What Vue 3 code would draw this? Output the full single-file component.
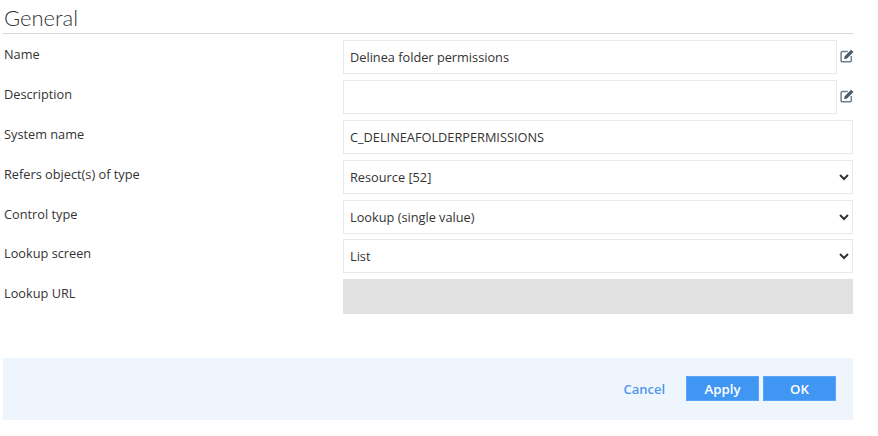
<script setup>
const rows = [
  { label: 'Name', type: 'input', value: 'Delinea folder permissions', edit: true },
  { label: 'Description', type: 'input', value: '', edit: true },
  { label: 'System name', type: 'input', value: 'C_DELINEAFOLDERPERMISSIONS' },
  { label: 'Refers object(s) of type', type: 'select', value: 'Resource [52]' },
  { label: 'Control type', type: 'select', value: 'Lookup (single value)' },
  { label: 'Lookup screen', type: 'select', value: 'List' },
  { label: 'Lookup URL', type: 'disabled', value: '' },
]
</script>

<template>
  <div class="page">
    <h2 class="title">General</h2>
    <div class="rows">
      <div v-for="row in rows" :key="row.label" class="row">
        <label class="label">{{ row.label }}</label>
        <div class="control" :class="{ editable: row.edit }">
          <select v-if="row.type === 'select'" class="field select">
            <option>{{ row.value }}</option>
          </select>
          <div v-else-if="row.type === 'disabled'" class="field disabled"></div>
          <input v-else class="field" type="text" :value="row.value" />
          <svg v-if="row.edit" class="edit" viewBox="0 0 14 14" aria-hidden="true">
            <path d="M7.8 2.6H2.2a1.1 1.1 0 0 0-1.1 1.1v8c0 .6.5 1.1 1.1 1.1h8c.6 0 1.1-.5 1.1-1.1V7" fill="none" stroke="#71808c" stroke-width="1.5" />
            <path d="M4 10.2l.7-3L10.6 1.2c.3-.3.7-.3 1 0l1.4 1.4c.3.3.3.7 0 1L7 9.5z" fill="#475a6a" />
          </svg>
        </div>
      </div>
    </div>
    <div class="footer">
      <a class="cancel">Cancel</a>
      <button class="btn apply">Apply</button>
      <button class="btn">OK</button>
    </div>
  </div>
</template>

<style>
html, body { margin: 0; background: #fff; }
</style>

<style scoped>
.page {
  width: 878px;
  height: 436px;
  box-sizing: border-box;
  padding-top: 6px;
  font-family: "Open Sans", "Liberation Sans", sans-serif;
  color: #333;
  overflow: hidden;
}
.title {
  margin: 0 25px 0 3px;
  height: 27px;
  padding-left: 1px;
  line-height: 24px;
  font-family: "Lato", "Open Sans", sans-serif;
  font-size: 22px;
  font-weight: 300;
  color: #333;
  border-bottom: 1px solid #d6d6d6;
}
.rows {
  display: flex;
  flex-direction: column;
  gap: 5.88px;
  margin-top: 6px;
}
.row {
  display: flex;
  height: 34px;
}
.label {
  width: 343px;
  box-sizing: border-box;
  padding-left: 4px;
  padding-top: 5px;
  font-size: 12.75px;
  line-height: 18px;
  color: #333;
}
.control {
  width: 510px;
  display: flex;
  align-items: center;
}
.field {
  display: block;
  width: 100%;
  height: 34px;
  box-sizing: border-box;
  margin: 0;
  padding: 0 6px;
  border: 1px solid #e9e9e9;
  border-radius: 0;
  background: #fff;
  font: 12.75px "Open Sans", "Liberation Sans", sans-serif;
  color: #333;
  outline: none;
}
.select {
  padding: 0 2px;
}
.disabled {
  height: 35px;
  background: #e1e1e1;
  border-color: #e1e1e1;
}
.editable {
  gap: 3px;
}
.editable .field {
  width: 494px;
  flex: none;
}
.edit {
  flex: none;
  width: 14px;
  height: 14px;
  margin-bottom: 2px;
}
.footer {
  display: flex;
  align-items: center;
  justify-content: flex-end;
  width: 850px;
  height: 62px;
  box-sizing: border-box;
  margin: 44.72px 0 0 3px;
  padding-right: 17px;
  background: #eff5fd;
}
.cancel {
  margin-right: 21px;
  font-size: 13px;
  font-weight: 600;
  color: #4f97ea;
}
.btn {
  width: 73px;
  height: 25px;
  margin: 0;
  padding: 0;
  border: 1px solid #5aa5f5;
  background: #4096f3;
  color: #fff;
  font: 600 13.25px "Open Sans", "Liberation Sans", sans-serif;
}
.apply {
  margin-right: 4px;
}
</style>
